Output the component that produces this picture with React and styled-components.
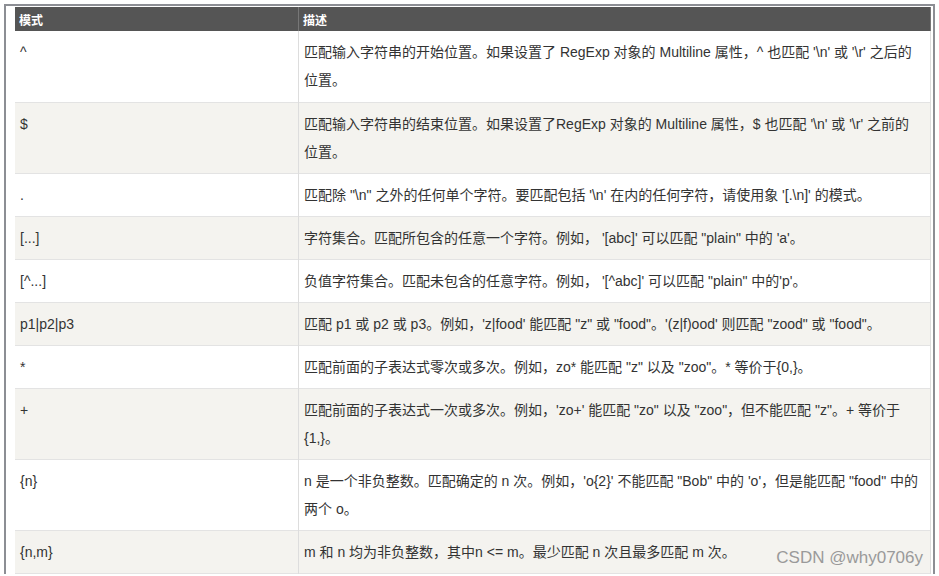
import React from 'react';
import styled, { createGlobalStyle } from 'styled-components';

const Global = createGlobalStyle`
  body { margin: 0; background: #fff; font-family: "Liberation Sans", "Noto Sans CJK SC", sans-serif; }
`;

const Frame = styled.div`
  margin: 4px 4px 0 4px;
  height: 570px;
  box-sizing: border-box;
  border: 2px solid #8c8e94;
  border-bottom: none;
  padding: 1px 2px 0 9px;
  overflow: hidden;
  position: relative;
`;

const Table = styled.table`
  width: 100%;
  border-collapse: collapse;
  font-size: 14px;
  color: #333;
  table-layout: fixed;
`;

const Th = styled.th`
  background: #555;
  color: #fff;
  text-align: left;
  font-size: 12px;
  font-weight: bold;
  height: 24px;
  padding: 0 4px;
  border-right: 1px solid #777;
  width: ${p => p.$w || 'auto'};
`;

const Tr = styled.tr`
  background: ${p => (p.$alt ? '#f4f3ef' : '#fff')};
  border-bottom: 1px solid #e3e3e3;
`;

const Td = styled.td`
  vertical-align: top;
  padding: 7px 8px 7px 5px;
  line-height: 28px;
  border-right: 1px solid #ddd;
  box-sizing: border-box;
  height: ${p => (p.$two ? '71px' : '43px')};
`;

const Mark = styled.div`
  position: absolute;
  right: 10px;
  bottom: 6px;
  color: #9a9a9a;
  font-size: 17px;
  background: #f4f3ef;
  padding-left: 6px;
`;

const rows = [
  ['^', "匹配输入字符串的开始位置。如果设置了 RegExp 对象的 Multiline 属性，^ 也匹配 '\\n' 或 '\\r' 之后的位置。", true],
  ['$', "匹配输入字符串的结束位置。如果设置了RegExp 对象的 Multiline 属性，$ 也匹配 '\\n' 或 '\\r' 之前的位置。", true],
  ['.', "匹配除 \"\\n\" 之外的任何单个字符。要匹配包括 '\\n' 在内的任何字符，请使用象 '[.\\n]' 的模式。"],
  ['[...]', "字符集合。匹配所包含的任意一个字符。例如， '[abc]' 可以匹配 \"plain\" 中的 'a'。"],
  ['[^...]', "负值字符集合。匹配未包含的任意字符。例如， '[^abc]' 可以匹配 \"plain\" 中的'p'。"],
  ['p1|p2|p3', "匹配 p1 或 p2 或 p3。例如，'z|food' 能匹配 \"z\" 或 \"food\"。'(z|f)ood' 则匹配 \"zood\" 或 \"food\"。"],
  ['*', "匹配前面的子表达式零次或多次。例如，zo* 能匹配 \"z\" 以及 \"zoo\"。* 等价于{0,}。"],
  ['+', "匹配前面的子表达式一次或多次。例如，'zo+' 能匹配 \"zo\" 以及 \"zoo\"，但不能匹配 \"z\"。+ 等价于 {1,}。", true],
  ['{n}', "n 是一个非负整数。匹配确定的 n 次。例如，'o{2}' 不能匹配 \"Bob\" 中的 'o'，但是能匹配 \"food\" 中的两个 o。", true],
  ['{n,m}', "m 和 n 均为非负整数，其中n <= m。最少匹配 n 次且最多匹配 m 次。"],
];

export default function App() {
  return (
    <>
      <Global />
      <Frame>
        <Table>
          <thead>
            <tr>
              <Th $w="275px">模式</Th>
              <Th>描述</Th>
            </tr>
          </thead>
          <tbody>
            {rows.map(([p, d, two], i) => (
              <Tr key={i} $alt={i % 2 === 1}>
                <Td $two={two}>{p}</Td>
                <Td $two={two}>{d}</Td>
              </Tr>
            ))}
          </tbody>
        </Table>
        <Mark>CSDN @why0706y</Mark>
      </Frame>
    </>
  );
}
